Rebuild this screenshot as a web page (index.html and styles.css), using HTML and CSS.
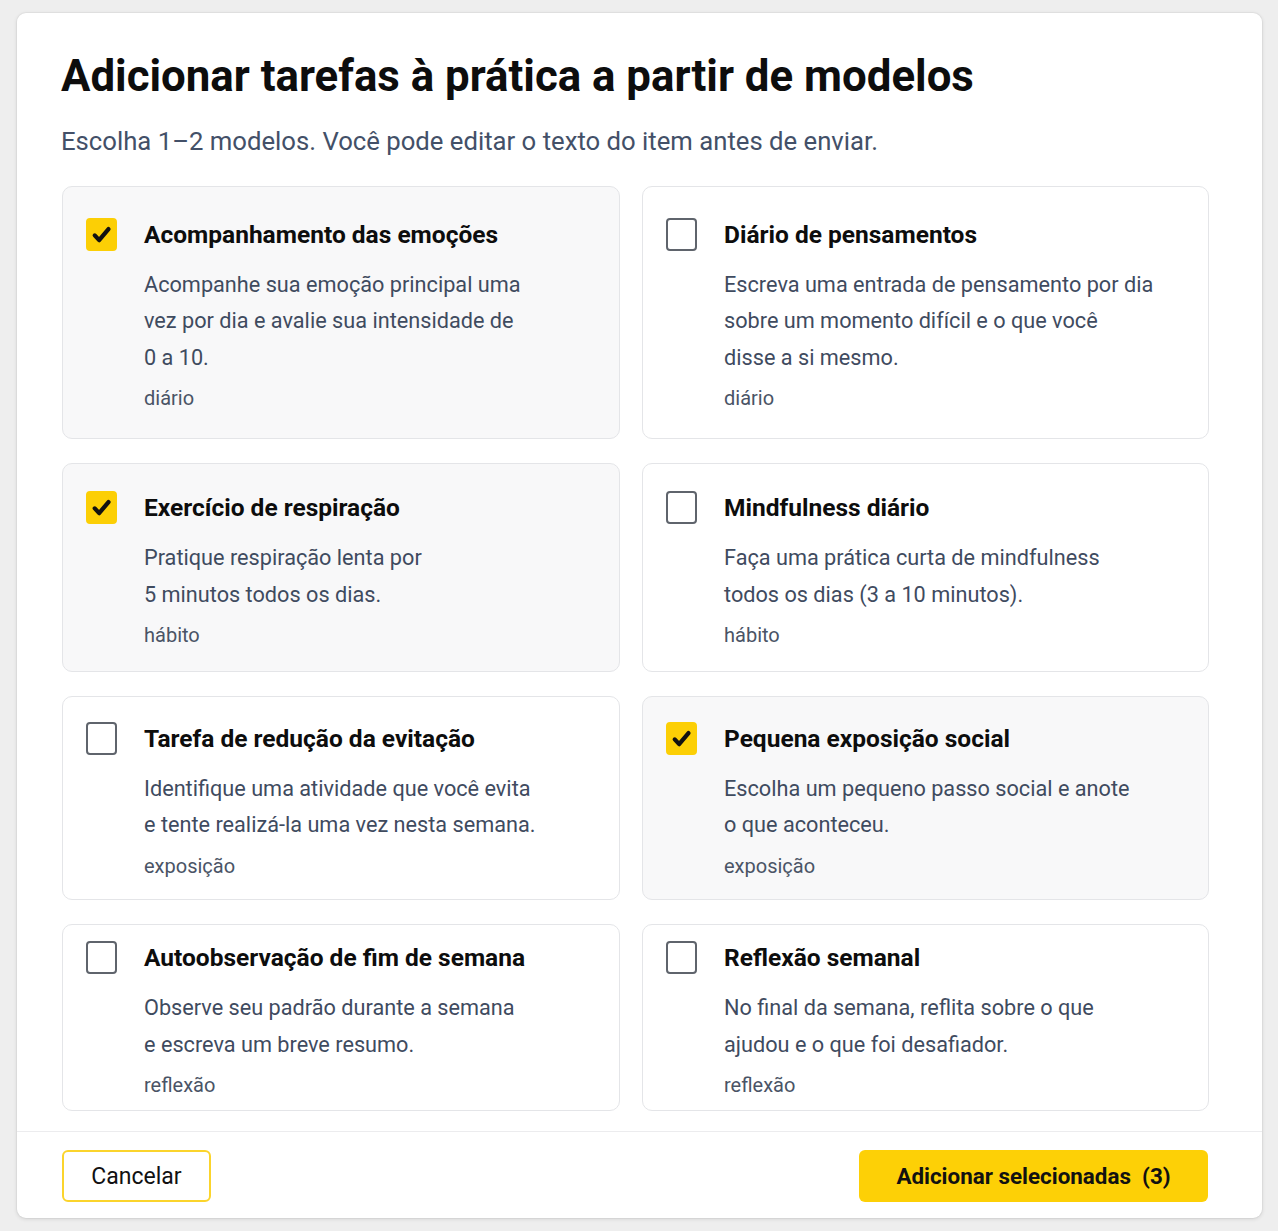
FILE: index.html
```html
<!DOCTYPE html>
<html>

<head>
  <meta charset="UTF-8">
  <title>Modelos de tarefas</title>
  <link rel="stylesheet" href="styles.css">
</head>

<body>

  <div class="modal">
    <div class="modal-head">
      <h1>Adicionar tarefas à prática a partir de modelos</h1>
      <p class="hint">Escolha 1–2 modelos. Você pode editar o texto do item antes de enviar.</p>
    </div>

    <div class="templates">
      <label class="card checked">
        <div class="card-row">
          <span class="box"><svg viewBox="0 0 24 24"><path d="M6 12.8l3.9 4.2 8.3-9.8"/></svg></span>
          <div class="info">
            <h3>Acompanhamento das emoções</h3>
            <p>Acompanhe sua emoção principal uma<br>vez por dia e avalie sua intensidade de<br>0 a 10.</p>
            <span class="tag">diário</span>
          </div>
        </div>
      </label>

      <label class="card">
        <div class="card-row">
          <span class="box"></span>
          <div class="info">
            <h3>Diário de pensamentos</h3>
            <p>Escreva uma entrada de pensamento por dia<br>sobre um momento difícil e o que você<br>disse a si mesmo.</p>
            <span class="tag">diário</span>
          </div>
        </div>
      </label>

      <label class="card checked">
        <div class="card-row">
          <span class="box"><svg viewBox="0 0 24 24"><path d="M6 12.8l3.9 4.2 8.3-9.8"/></svg></span>
          <div class="info">
            <h3>Exercício de respiração</h3>
            <p>Pratique respiração lenta por<br>5 minutos todos os dias.</p>
            <span class="tag">hábito</span>
          </div>
        </div>
      </label>

      <label class="card">
        <div class="card-row">
          <span class="box"></span>
          <div class="info">
            <h3>Mindfulness diário</h3>
            <p>Faça uma prática curta de mindfulness<br>todos os dias (3 a 10 minutos).</p>
            <span class="tag">hábito</span>
          </div>
        </div>
      </label>

      <label class="card">
        <div class="card-row">
          <span class="box"></span>
          <div class="info">
            <h3>Tarefa de redução da evitação</h3>
            <p>Identifique uma atividade que você evita<br>e tente realizá-la uma vez nesta semana.</p>
            <span class="tag">exposição</span>
          </div>
        </div>
      </label>

      <label class="card checked">
        <div class="card-row">
          <span class="box"><svg viewBox="0 0 24 24"><path d="M6 12.8l3.9 4.2 8.3-9.8"/></svg></span>
          <div class="info">
            <h3>Pequena exposição social</h3>
            <p>Escolha um pequeno passo social e anote<br>o que aconteceu.</p>
            <span class="tag">exposição</span>
          </div>
        </div>
      </label>

      <label class="card">
        <div class="card-row">
          <span class="box"></span>
          <div class="info">
            <h3>Autoobservação de fim de semana</h3>
            <p>Observe seu padrão durante a semana<br>e escreva um breve resumo.</p>
            <span class="tag">reflexão</span>
          </div>
        </div>
      </label>

      <label class="card">
        <div class="card-row">
          <span class="box"></span>
          <div class="info">
            <h3>Reflexão semanal</h3>
            <p>No final da semana, reflita sobre o que<br>ajudou e o que foi desafiador.</p>
            <span class="tag">reflexão</span>
          </div>
        </div>
      </label>
    </div>

    <div class="modal-foot">
      <button class="btn btn-ghost">Cancelar</button>
      <button class="btn btn-main">Adicionar selecionadas&nbsp; (3)</button>
    </div>
  </div>

</body>

</html>
```

FILE: styles.css
```css
html {
  background: #eeeeee;
}

body {
  margin: 0;
  padding: 13px 16px 13px 17px;
  font-family: Roboto, "Liberation Sans", sans-serif;
  color: #111;
}

.modal {
  background: #fff;
  border-radius: 9px;
  box-shadow: 0 1px 4px rgba(0, 0, 0, 0.12), 0 0 0 1px rgba(0, 0, 0, 0.03);
  display: flex;
  flex-direction: column;
}

.modal-head {
  padding: 37px 53px 0 44px;
}

h1 {
  margin: 0;
  font-size: 43.8px;
  line-height: 52px;
  font-weight: 700;
  letter-spacing: 0;
  color: #0d0d0d;
}

.hint {
  margin: 24px 0 0;
  font-size: 25.7px;
  line-height: 30px;
  color: #435068;
}

.templates {
  flex: none;
  display: grid;
  grid-template-columns: 558px 1fr;
  grid-template-rows: 253px 209px 204px 187px;
  column-gap: 22px;
  row-gap: 24px;
  padding: 30px 53px 20px 45px;
  border-bottom: 1px solid #ececee;
}

.card {
  display: flex;
  align-items: center;
  padding: 4px 20px 0 23px;
  border: 1px solid #e4e5e8;
  border-radius: 10px;
  background: #fff;
  cursor: pointer;
}

.card.checked {
  background: #f8f8f9;
}

.card-row {
  display: flex;
  align-items: flex-start;
  gap: 27px;
}

.box {
  flex: none;
  width: 27px;
  height: 29px;
  margin-top: 0;
  border: 2px solid #5f646c;
  border-radius: 4px;
  background: #fff;
}

.checked .box {
  border-color: #fccf05;
  background: #fccf05;
}

.box svg {
  display: block;
  width: 27px;
  height: 29px;
  fill: none;
  stroke: #111;
  stroke-width: 3.8;
  stroke-linecap: round;
  stroke-linejoin: round;
}

.info h3 {
  margin: 0;
  font-size: 24.5px;
  line-height: 34px;
  font-weight: 700;
  color: #0d0d0d;
}

.info p {
  margin: 15px 0 0;
  font-size: 21.7px;
  line-height: 36.5px;
  color: #3f4b5f;
}

.tag {
  display: block;
  margin-top: 9px;
  font-size: 20px;
  line-height: 26px;
  color: #4a5466;
}

.modal-foot {
  display: flex;
  justify-content: space-between;
  align-items: center;
  padding: 18px 54px 16px 45px;
}

.btn {
  font-family: Roboto, "Liberation Sans", sans-serif;
  font-size: 23px;
  height: 52px;
  border-radius: 6px;
  cursor: pointer;
}

.btn-ghost {
  width: 149px;
  background: #fff;
  border: 2px solid #fbd42c;
  color: #111;
}

.btn-main {
  width: 349px;
  background: #fdd006;
  border: none;
  font-size: 22.4px;
  font-weight: 700;
  color: #111;
}
```
